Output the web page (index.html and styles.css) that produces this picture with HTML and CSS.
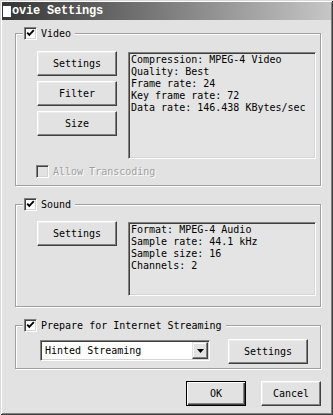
FILE: index.html
```html
<!DOCTYPE html>
<html>
<head>
<meta charset="utf-8">
<link rel="stylesheet" href="styles.css">
</head>
<body>
<div class="window">
  <div class="titlebar"><span class="app-icon"></span><span class="title">ovie Settings</span></div>

  <div class="group group-video">
    <div class="legend"><span class="check"><svg width="9" height="9" viewBox="0 0 9 9"><path d="M1.2 3.6 L3.3 5.8 L7.8 1.2" fill="none" stroke="#000" stroke-width="1.9"/></svg></span><span class="legend-text">Video</span></div>
    <div class="row">
      <div class="btn-col">
        <div class="btn">Settings</div>
        <div class="btn">Filter</div>
        <div class="btn">Size</div>
      </div>
      <div class="info info-video">Compression: MPEG-4 Video<br>Quality: Best<br>Frame rate: 24<br>Key frame rate: 72<br>Data rate: 146.438 KBytes/sec</div>
    </div>
    <div class="allow"><span class="check check-disabled"></span><span class="disabled-text">Allow Transcoding</span></div>
  </div>

  <div class="group group-sound">
    <div class="legend"><span class="check"><svg width="9" height="9" viewBox="0 0 9 9"><path d="M1.2 3.6 L3.3 5.8 L7.8 1.2" fill="none" stroke="#000" stroke-width="1.9"/></svg></span><span class="legend-text">Sound</span></div>
    <div class="row row-sound">
      <div class="btn-col">
        <div class="btn">Settings</div>
      </div>
      <div class="info info-sound">Format: MPEG-4 Audio<br>Sample rate: 44.1 kHz<br>Sample size: 16<br>Channels: 2</div>
    </div>
  </div>

  <div class="group group-stream">
    <div class="legend"><span class="check"><svg width="9" height="9" viewBox="0 0 9 9"><path d="M1.2 3.6 L3.3 5.8 L7.8 1.2" fill="none" stroke="#000" stroke-width="1.9"/></svg></span><span class="legend-text">Prepare for Internet Streaming</span></div>
    <div class="row row-stream">
      <div class="select">
        <span class="select-text">Hinted Streaming</span>
        <span class="select-arrow"><svg width="7" height="4" viewBox="0 0 7 4"><path d="M0 0 H7 L3.5 4 Z" fill="#000"/></svg></span>
      </div>
      <div class="btn btn-stream">Settings</div>
    </div>
  </div>

  <div class="footer">
    <div class="btn btn-small btn-default">OK</div>
    <div class="btn btn-small">Cancel</div>
  </div>
</div>
</body>
</html>
```
FILE: styles.css
```css
html, body {
  margin: 0;
  padding: 0;
  background: #e0e0e0;
}
.window {
  width: 333px;
  height: 415px;
  box-sizing: border-box;
  padding: 2px;
  background: #e2e2e2;
  box-shadow: inset 1px 1px 0 #d8d8d8, inset -1px -1px 0 #404040, inset 2px 2px 0 #ffffff, inset -2px -2px 0 #808080;
  font-family: "DejaVu Sans Mono", monospace;
  font-size: 10px;
  color: #000;
  display: flex;
  flex-direction: column;
}
.titlebar {
  height: 18px;
  background: linear-gradient(to right, #353535, #c6c6c6);
  display: flex;
  align-items: center;
  color: #fff;
  font-family: "Liberation Mono", monospace;
  font-size: 12px;
  font-weight: bold;
  letter-spacing: -0.2px;
}
.app-icon {
  width: 8px;
  height: 11px;
  background: #fff;
  margin-left: 1px;
}
.title {
  margin-left: 1px;
}
.group {
  margin: 13px 10px 0 13px;
  border: 1px solid #a0a0a0;
  box-shadow: 1px 1px 0 #fff, inset 1px 1px 0 #fff;
}
.legend {
  display: flex;
  align-items: center;
  width: fit-content;
  height: 13px;
  margin: -7px 0 0 7px;
  padding: 0 4px 0 1px;
  background: #e2e2e2;
}
.legend-text {
  margin-left: 4px;
}
.check {
  width: 13px;
  height: 13px;
  box-sizing: border-box;
  background: #fff;
  border: 1px solid;
  border-color: #808080 #fff #fff #808080;
  box-shadow: inset 1px 1px 0 #404040, inset -1px -1px 0 #d4d4d4;
  display: flex;
  align-items: center;
  justify-content: center;
}
.check-disabled {
  background: #e2e2e2;
}
.row {
  display: flex;
  margin-top: 11px;
}
.btn-col {
  display: flex;
  flex-direction: column;
  gap: 5px;
  margin-left: 21px;
}
.btn {
  width: 80px;
  height: 25px;
  box-sizing: border-box;
  border: 1px solid;
  border-color: #fff #404040 #404040 #fff;
  box-shadow: inset -1px -1px 0 #808080, inset 1px 1px 0 #ececec;
  display: flex;
  align-items: center;
  justify-content: center;
  background: #e2e2e2;
}
.info {
  margin: 1px 0 0 11px;
  width: 188px;
  box-sizing: border-box;
  border: 1px solid;
  border-color: #808080 #fff #fff #808080;
  box-shadow: inset 1px 1px 0 #404040, inset -1px -1px 0 #d4d4d4;
  padding: 1px 0 0 2px;
  line-height: 12px;
  white-space: nowrap;
  background: #e4e4e4;
}
.info-video {
  height: 107px;
}
.info-sound {
  height: 74px;
}
.allow {
  display: flex;
  align-items: center;
  margin: 6px 0 7px 20px;
}
.disabled-text {
  margin-left: 4px;
  color: #a0a0a0;
  text-shadow: 1px 1px 0 #fff;
}
.group-sound {
  margin-top: 18px;
  padding-bottom: 10px;
}
.row-sound {
  margin-top: 10px;
}
.group-stream {
  margin-top: 18px;
  padding-bottom: 4px;
}
.row-stream {
  margin-top: 7px;
  align-items: flex-start;
}
.select {
  margin: 1px 0 0 24px;
  width: 170px;
  height: 21px;
  box-sizing: border-box;
  border: 1px solid;
  border-color: #808080 #fff #fff #808080;
  box-shadow: inset 1px 1px 0 #404040, inset -1px -1px 0 #d4d4d4;
  background: #fff;
  display: flex;
  align-items: center;
  justify-content: space-between;
  padding: 1px;
}
.select-text {
  margin-left: 3px;
}
.select-arrow {
  width: 16px;
  height: 17px;
  box-sizing: border-box;
  border: 1px solid;
  border-color: #e2e2e2 #404040 #404040 #e2e2e2;
  box-shadow: inset -1px -1px 0 #808080, inset 1px 1px 0 #fff;
  background: #e2e2e2;
  display: flex;
  align-items: center;
  justify-content: center;
}
.btn-stream {
  margin-left: 18px;
}
.footer {
  display: flex;
  justify-content: flex-end;
  gap: 15px;
  margin: 12px 10px 0 0;
}
.btn-small {
  width: 60px;
}
.btn-default {
  border-color: #000;
  box-shadow: inset 1px 1px 0 #fff, inset -1px -1px 0 #404040, inset -2px -2px 0 #808080;
}
```
